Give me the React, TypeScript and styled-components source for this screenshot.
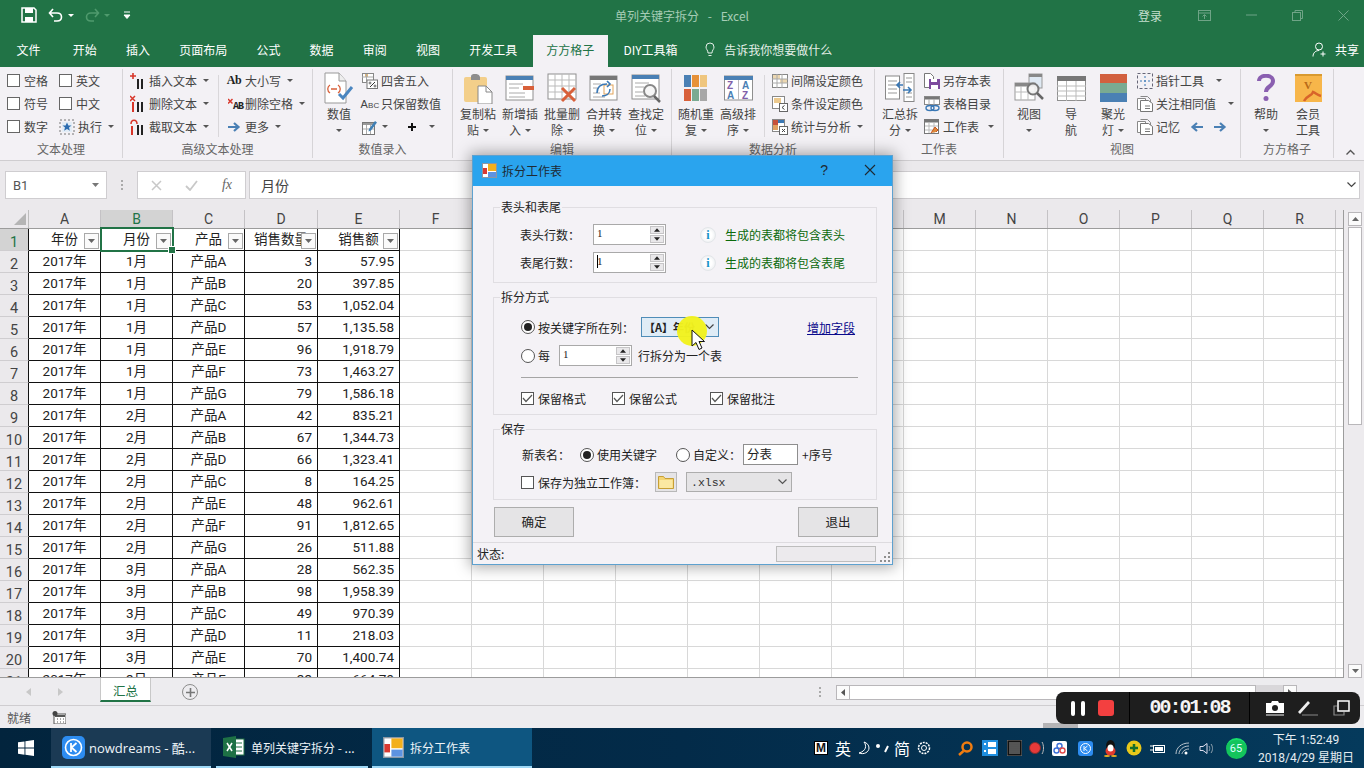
import React from 'react';
import styled, { createGlobalStyle } from 'styled-components';

const Global = createGlobalStyle`
  html, body { margin: 0; padding: 0; width: 1364px; height: 768px; overflow: hidden; background: #edebee; }
  * { box-sizing: border-box; }
  body { font-family: "Noto Sans CJK SC", Roboto, sans-serif; font-size: 12px; color: #444; }
`;

const Screen = styled.div`position: relative; width: 1364px; height: 768px; display: flex; flex-direction: column; overflow: hidden;`;

/* ---------- title ---------- */
const TitleBar = styled.div`height: 34px; padding-bottom: 4px; background: #217346; display: flex; align-items: center; color: #a6cdb6; flex: none;`;
const Qat = styled.div`width: 140px; display: flex; align-items: center; padding-left: 21px; flex: none;`;
const DocTitle = styled.div`width: 1084px; text-align: center; white-space: pre; font-size: 12px; word-spacing: 1.700px;`;
const Login = styled.div`margin-left: -86px; width: 40px; color: #c4dfce;`;
const WinBtns = styled.div`display: flex; margin-left: 20px; gap: 35px; align-items: center;`;

const TabsRow = styled.div`height: 33px; background: #217346; display: flex; align-items: flex-end; padding-left: 2px; color: #fff; flex: none; position: relative;`;
const Tab = styled.div<{ $active?: boolean; $mr?: number }>`
  height: 32px; line-height: 29px; padding: 0 ${p => (p.$active ? 13.5 : 14.6)}px; margin-right: ${p => p.$mr ?? 0}px;
  ${p => p.$active && 'background:#f3f1f5;color:#217346;margin-left:1px;margin-right:1px;'}
`;
const Tell = styled.div`display: flex; align-items: center; gap: 9px; height: 32px; padding-bottom: 3px; margin-left: 13px; color: #e4efe8;`;
const Share = styled.div`margin-left: auto; margin-right: 5px; display: flex; align-items: center; gap: 7px; height: 32px; padding-bottom: 3px;`;

/* ---------- ribbon ---------- */
const Ribbon = styled.div`height: 94px; background: #f3f1f5; display: flex; border-bottom: 1px solid #cfcdd0; padding-top: 2px; flex: none; position: relative;`;
const Group = styled.div<{ $w: number }>`width: ${p => p.$w}px; flex: none; display: flex; flex-direction: column; border-right: 1px solid #d6d4d7; height: 89px;`;
const GroupBody = styled.div<{ $pl: number }>`height: 70px; display: flex; padding-left: ${p => p.$pl}px;`;
const GroupLabel = styled.div`height: 19px; line-height: 20px; text-align: center; color: #666; font-size: 12px;`;
const SmallCol = styled.div<{ $w?: number; $ml?: number }>`display: flex; flex-direction: column; ${p => p.$w && `width:${p.$w}px;`} ${p => p.$ml && `margin-left:${p.$ml}px;`}`;
const Small = styled.div`height: 23px; display: flex; align-items: center; gap: 3px; white-space: nowrap; color: #444;`;
const IconSlot = styled.span`width: 16px; height: 18px; display: flex; align-items: center; justify-content: center; flex: none;`;
const Caret = styled.i<{ $ml?: number }>`display: inline-block; width: 0; height: 0; border-left: 3px solid transparent; border-right: 3px solid transparent; border-top: 3px solid #555; margin-left: ${p => p.$ml ?? 3}px; flex: none;`;
const Check = styled.span`width: 13px; height: 13px; background: #fff; border: 1px solid #666; flex: none; margin-right: 1px;`;
const VSep = styled.div<{ $mr: number; $ml?: number }>`width: 1px; height: 62px; margin: 6px ${p => p.$mr}px 0 ${p => p.$ml ?? 0}px; background: #d9d7da; flex: none;`;
const Large = styled.div`width: 42px; flex: none; display: flex; flex-direction: column; align-items: center; color: #444;`;
const LargeIcon = styled.div`height: 37px; display: flex; align-items: center; justify-content: center;`;
const LargeLine = styled.div`height: 16px; line-height: 16px; display: flex; align-items: center; justify-content: center; white-space: nowrap;`;
const BoldTag = styled.span<{ $size?: number }>`font-family: "Liberation Serif", serif; font-weight: 700; color: #222; font-size: ${p => p.$size ?? 12}px; letter-spacing: -.3px;`;
const AbTag = styled(BoldTag)`margin: 5px -3px 0 0; font-family: "Liberation Mono", monospace; letter-spacing: -1px;`;
const SansTag = styled.span`font-family: "Liberation Sans", sans-serif; color: #444; font-size: 11px; font-variant: small-caps; letter-spacing: .2px;`;
const Collapse = styled.div`position: absolute; right: 9px; bottom: 5px; line-height: 0;`;

/* ---------- formula ---------- */
const FormulaRow = styled.div`height: 49px; background: #ebe9ec; display: flex; align-items: center; padding: 0 4px 1px 5px; flex: none;`;
const NameBox = styled.div`width: 102px; height: 28px; background: #fff; border: 1px solid #cfcdd0; display: flex; align-items: center; justify-content: space-between; padding: 0 7px; color: #555; font-family: Roboto, sans-serif; font-size: 13px;`;
const Grip = styled.div`width: 30px; display: flex; flex-direction: column; align-items: center; gap: 2px;
  i { width: 2px; height: 2px; background: #aaa; }`;
const FxBox = styled.div`width: 109px; height: 28px; background: #fff; border: 1px solid #cfcdd0; display: flex; align-items: center; justify-content: space-between; padding: 0 13px 0 13px; color: #777;`;
const FxLabel = styled.span`font-family: "Liberation Serif", serif; font-style: italic; font-size: 14px; color: #666;`;
const FormulaInput = styled.div`flex: 1; margin-left: 3px; height: 28px; background: #fff; border: 1px solid #cfcdd0; display: flex; align-items: center; justify-content: space-between; padding: 0 3px 0 11px; font-size: 14px; color: #444;`;

/* ---------- sheet ---------- */
const SheetArea = styled.div`height: 468px; display: flex; flex: none;`;
const SheetGrid = styled.div`width: 1344px; height: 468px; overflow: hidden; background: #fff; border-right: 1px solid #9c9c9c; display: flex; flex-direction: column; flex: none; border-bottom: 1px solid #9c9c9c;`;
const HeadRow = styled.div`display: flex; height: 18px; background: #ebe9ec; border-bottom: 1px solid #9c9c9c; flex: none; box-sizing: content-box;`;
const Corner = styled.div`width: 29px; height: 18px; flex: none; padding: 3px 0 0 14px; border-right: 1px solid #bdbdbd; line-height: 0;`;
const ColHead = styled.div<{ $w: number; $on?: boolean }>`
  width: ${p => p.$w}px; flex: none; height: 18px; line-height: 19px; text-align: center; font-family: Roboto, sans-serif; font-size: 14px;
  border-right: 1px solid #c4c2c5; color: ${p => (p.$on ? '#217346' : '#444')}; background: ${p => (p.$on ? '#d3d3d3' : 'transparent')};
`;
const Row = styled.div`display: flex; height: 22px; flex: none;`;
const RowHead = styled.div<{ $on?: boolean }>`
  width: 29px; flex: none; height: 22px; background: ${p => (p.$on ? '#d3d3d3' : '#ebe9ec')}; text-align: center; padding-top: 4px; line-height: 20px;
  border-right: 1px solid #111; border-bottom: 1px solid #cfcdd0; font-family: Roboto, sans-serif; font-size: 14.5px; color: ${p => (p.$on ? '#217346' : '#444')};
`;
const Cell = styled.div<{ $w: number; $align?: string }>`
  position: relative; width: ${p => p.$w}px; flex: none; height: 22px; line-height: 21px; white-space: nowrap; overflow: hidden;
  border-right: 1px solid #111; border-bottom: 1px solid #111; color: #222;
  font-family: Roboto, "Noto Sans CJK SC", sans-serif; font-size: 13.5px;
  text-align: ${p => p.$align ?? 'center'}; padding-right: ${p => (p.$align === 'right' ? 5 : 0)}px;
`;
const BlankCell = styled.div<{ $w: number }>`width: ${p => p.$w}px; flex: none; height: 22px; border-right: 1px solid #d8d8d8; border-bottom: 1px solid #d8d8d8;`;
const FilterBtn = styled.span`position: absolute; right: 1px; top: 4px; width: 15px; height: 16px; background: #fafafa; border: 1px solid #a9a9a9; display: flex; align-items: center; justify-content: center;`;
const Selected = styled.div`position: absolute; left: 100px; top: 17px; width: 74px; height: 25px; border: 2px solid #217346; pointer-events: none;
  &::after { content: ''; position: absolute; right: -4px; bottom: -4px; width: 6px; height: 6px; background: #217346; border: 1px solid #fff; }`;
const GridWrap = styled.div`position: relative; flex: none; width: 1344px;`;
const VScroll = styled.div`width: 20px; flex: none; padding: 2px 2px 0 4px; display: flex; flex-direction: column; gap: 1px;`;
const ScrollBtn = styled.div`width: 14px; height: 14px; background: #fbfbfb; border: 1px solid #b9b7ba; display: flex; align-items: center; justify-content: center; flex: none;`;
const Thumb = styled.div`width: 14px; height: 198px; background: #fff; border: 1px solid #b9b7ba; flex: none;`;
const TrackGap = styled.div`flex: 1;`;

/* ---------- bottom bars ---------- */
const SheetBar = styled.div`height: 28px; background: #edecef; display: flex; align-items: flex-start; flex: none; border-bottom: 1px solid #cfcdd0;`;
const SheetArrows = styled.div`width: 100px; height: 28px; display: flex; align-items: center; padding-left: 26px; gap: 25px;`;
const SheetTab = styled.div`width: 51px; height: 24px; background: #fff; color: #217346; text-align: center; line-height: 25px; font-size: 12.5px; border-bottom: 2px solid #217346; border-left: 1px solid #c8c8c8; border-right: 1px solid #c8c8c8;`;
const AddSheet = styled.div`margin: 6px 0 0 31px; width: 16px; height: 16px; border: 1.5px solid #8c8c8c; border-radius: 50%; color: #777; display: flex; align-items: center; justify-content: center;`;
const Dots = styled.div`margin: 9px 0 0 621px; display: flex; flex-direction: column; gap: 2px; i { width: 2px; height: 2px; background: #aaa; }`;
const HScroll = styled.div`margin: 7px 0 0 15px; display: flex; height: 15px;`;
const HArrow = styled.div`width: 14px; height: 15px; background: #fbfbfb; border: 1px solid #b9b7ba; display: flex; align-items: center; justify-content: center;`;
const HThumb = styled.div`width: 406px; height: 15px; background: #fff; border: 1px solid #b9b7ba; border-left: 0;`;
const HGrey = styled.div`width: 27px; height: 15px; background: #d9d7da;`;

const StatusBar = styled.div`height: 22px; background: #edecef; display: flex; align-items: center; padding-left: 7px; gap: 21px; color: #555; flex: none; position: relative;`;
const ZoomStub = styled.div`position: absolute; left: 1043px; bottom: 0; width: 35px; height: 5px; background: #b5b4b6;`;

/* ---------- taskbar ---------- */
const Taskbar = styled.div`height: 40px; background: linear-gradient(90deg, #02243d 0%, #032b49 50%, #053a5c 100%); display: flex; align-items: stretch; color: #fff; flex: none;`;
const Start = styled.div`width: 51px; display: flex; align-items: center; justify-content: center;`;
const TaskItem = styled.div<{ $w: number; $bg?: string; $ml?: number; $pl?: number }>`
  width: ${p => p.$w}px; margin-left: ${p => p.$ml ?? 0}px; background: ${p => p.$bg ?? 'transparent'}; display: flex; align-items: center; gap: 4px; padding: 0 4px 0 ${p => p.$pl ?? 11}px; font-size: 12px;
  border-bottom: 2px solid #9ed8f6; white-space: nowrap; color: #eef4f8; overflow: hidden;
`;
const TaskLatin = styled.span`font-family: "Open Sans", "Noto Sans CJK SC", sans-serif; font-size: 13px;`;
const Tray = styled.div`margin-left: auto; display: flex; align-items: center; height: 40px;`;
const TraySlot = styled.span<{ $w: number; $ml?: number }>`width: ${p => p.$w}px; margin-left: ${p => p.$ml ?? 0}px; flex: none; display: flex; align-items: center; justify-content: center; color: #fff;`;
const MBox = styled.span`width: 14px; height: 14px; background: #fff; color: #111; border: 1px solid #000; font: 700 12px/12px "Liberation Sans", sans-serif; text-align: center;`;
const ImeText = styled.span`font-size: 16px; color: #fff;`;
const BatteryBadge = styled.span`width: 21px; height: 21px; border-radius: 50%; background: #13c45c; color: #dff; border-top: 2px solid #18e06c; font: 400 11px/18px Roboto, sans-serif; text-align: center;`;
const Clock = styled.div`width: 108px; margin-left: 6px; padding: 1px 8px 0 0; font-size: 12px; line-height: 18px; color: #e6edf2; display: flex; flex-direction: column; align-items: center; white-space: nowrap; font-family: Roboto, "Noto Sans CJK SC", sans-serif;`;

/* ---------- dialog ---------- */
const Dialog = styled.div`position: absolute; left: 472px; top: 155px; width: 421px; height: 410px; background: #f4f2f6; border: 1px solid #5ea1cf; box-shadow: 0 0 14px 2px rgba(0, 0, 0, .35); color: #222; display: flex; flex-direction: column; font-size: 12px;`;
const DlgTitle = styled.div`height: 30px; background: #2aa4ee; display: flex; align-items: center; padding: 0 16px 2px 9px; gap: 5px; color: #1e2a33; flex: none;`;
const DlgTitleRight = styled.div`margin-left: auto; display: flex; align-items: center; gap: 36px; font-size: 14px; font-family: "Liberation Sans", sans-serif;`;
const GroupBox = styled.div<{ $h: number; $mt: number; $pt: number; $pl: number }>`
  position: relative; width: 384px; height: ${p => p.$h}px; margin: ${p => p.$mt}px 0 0 20px; padding: ${p => p.$pt}px 0 0 ${p => p.$pl}px; border: 1px solid #e0dee2; display: flex; flex-direction: column; flex: none;
`;
const Legend = styled.span`position: absolute; left: 6px; top: -10px; padding: 0 1px; background: #f4f2f6; line-height: 18px;`;
const FormRow = styled.div<{ $h?: number; $mt?: number }>`display: flex; align-items: center; height: ${p => p.$h ?? 21}px; margin-top: ${p => p.$mt ?? 0}px; white-space: nowrap;`;
const FieldLabel = styled.span<{ $w?: number; $ml?: number }>`${p => p.$w && `width:${p.$w}px;`} margin-left: ${p => p.$ml ?? 0}px; flex: none;`;
const Spin = styled.div<{ $ml?: number }>`width: 73px; height: 21px; background: #fff; border: 1px solid #a9a9a9; margin-left: ${p => p.$ml ?? 0}px; display: flex; justify-content: space-between; flex: none; font: 11px/14px "Liberation Serif", serif; padding: 1px 1px 1px 3px;`;
const SpinValue = styled.span<{ $focus?: boolean }>`position: relative;
  ${p => p.$focus && `&::before { content: ''; position: absolute; left: 0; top: 1px; width: 1px; height: 13px; background: #000; }`}`;
const SpinBtns = styled.div`width: 14px; display: flex; flex-direction: column; gap: 1px;`;
const SpinBtn = styled.div`flex: 1; background: #e9e8ea; border: 1px solid #c6c5c7; display: flex; align-items: center; justify-content: center;`;
const InfoDot = styled.span`width: 16px; height: 16px; border-radius: 50%; background: radial-gradient(circle, #fff 40%, #e2e6ea 100%); border: 1px solid #e3e6e9; color: #1993c8; margin: 0 9px 0 34px; font: 700 12px/14px "Liberation Serif", serif; text-align: center; flex: none;`;
const Hint = styled.span`color: #0b6a0b;`;
const Radio = styled.span<{ $on?: boolean; $ml?: number }>`
  width: 14px; height: 14px; border: 1px solid #555; border-radius: 50%; background: #fff; margin-left: ${p => p.$ml ?? 0}px; margin-right: 3px; flex: none; display: flex; align-items: center; justify-content: center;
  &::after { content: ''; width: 8px; height: 8px; border-radius: 50%; background: ${p => (p.$on ? '#222' : 'transparent')}; }
`;
const Tick = styled.span<{ $ml?: number }>`width: 13px; height: 13px; border: 1px solid #555; background: #fff; margin-left: ${p => p.$ml ?? 0}px; margin-right: 4px; flex: none; display: flex; align-items: center; justify-content: center;`;
const Combo = styled.div`width: 78px; height: 20px; margin-left: 7px; background: #dfecf6; border: 1px solid #4f8db8; display: flex; align-items: center; justify-content: space-between; padding: 0 4px 0 2px; font-weight: 700; font-size: 11px; color: #222; overflow: hidden;`;
const LinkText = styled.span`margin-left: 88px; color: #0a0a8c; text-decoration: underline;`;
const Rule = styled.div`width: 337px; height: 1px; background: #a5a5a5; margin-top: 11px; flex: none;`;
const TextInput = styled.div`width: 55px; height: 21px; margin-left: 2px; margin-right: 4px; background: #fff; border: 1px solid #8e8e8e; line-height: 18px; padding-left: 3px; font-size: 12.5px;`;
const FolderBtn = styled.div`width: 22px; height: 20px; margin-left: 9px; background: #e5e4e6; border: 1px solid #b8b8b8; display: flex; align-items: center; justify-content: center;`;
const SelectBox = styled.div`width: 106px; height: 20px; margin-left: 9px; background: #e5e4e6; border: 1px solid #adadad; display: flex; align-items: center; justify-content: space-between; padding: 0 4px; font: 11.5px "Liberation Mono", monospace; color: #333;`;
const BtnRow = styled.div`display: flex; justify-content: space-between; width: 384px; margin: 7px 0 0 21px; flex: none;`;
const DlgBtn = styled.div`width: 80px; height: 30px; background: #e5e4e6; border: 1px solid #adadad; text-align: center; line-height: 28px; font-size: 12.5px;`;
const DlgStatus = styled.div`margin-top: 5px; flex: 1; border-top: 1px solid #dddbdf; display: flex; align-items: center; padding: 0 2px 0 4px; position: relative;`;
const Progress = styled.div`width: 100px; height: 16px; margin-left: auto; margin-right: 4px; background: #eceaed; border: 1px solid #bdbdbd;`;
const ResizeGrip = styled.span`align-self: flex-end; margin-bottom: 2px; line-height: 0;`;

const Spot = styled.div`position: absolute; left: 677px; top: 316px; width: 30px; height: 30px; border-radius: 50%; background: #f2f21e; opacity: .97;`;
const Pointer = styled.div`position: absolute; left: 691px; top: 329px; line-height: 0;`;

/* ---------- recorder ---------- */
const Recorder = styled.div`position: absolute; left: 1056px; top: 692px; width: 304px; height: 32px; border-radius: 8px; background: #1e1e1e; display: flex; align-items: center; color: #fff;`;
const RecSection = styled.div<{ $w: number; $border?: boolean; $pl?: number }>`width: ${p => p.$w}px; height: 32px; padding-left: ${p => p.$pl ?? 0}px; display: flex; align-items: center; justify-content: center; flex: none; ${p => p.$border && 'border-right:1px solid #000;'}`;
const PauseBar = styled.i`width: 4px; height: 15px; background: #fff; border-radius: 2px; margin-right: 6px;`;
const StopBtn = styled.i`width: 16px; height: 16px; background: #f34040; border-radius: 3px; margin-left: 13px;`;
const Timer = styled.span`font: 700 20px/1 "Liberation Mono", monospace; letter-spacing: -2px; color: #f4f4f4;`;

/* ---------- drawings ---------- */
const S = ({ w, h, children }: { w: number; h: number; children: React.ReactNode }) => (
  <svg width={w} height={h} viewBox={`0 0 ${w} ${h}`} fill="none">{children}</svg>
);
const Bars = ({ x = 6 }: { x?: number }) => (<><rect x={x} y="7" width="2" height="10" fill="#222" /><rect x={x + 4} y="7" width="2" height="10" fill="#222" /></>);
const IcoInsert = () => <S w={16} h={18}><path d="M3 1v6M0 4h6" stroke="#d8362a" strokeWidth="1.6" /><Bars x={7} /></S>;
const IcoDelete = () => <S w={16} h={18}><path d="M0 1l5 5M5 1L0 6" stroke="#d8362a" strokeWidth="1.5" /><rect x="2" y="7" width="2" height="10" fill="#d8362a" /><Bars x={7} /></S>;
const IcoCut = () => <S w={16} h={18}><path d="M1 6c0-5 6-5 6 0" stroke="#d8362a" strokeWidth="1.5" /><rect x="1" y="8" width="2" height="9" fill="#d8362a" /><Bars x={7} /></S>;
const IcoArrowR = ({ c = '#4a80b4' }: { c?: string }) => <S w={14} h={12}><path d="M1 6h10M7 2l4.5 4L7 10" stroke={c} strokeWidth="2.2" /></S>;
const IcoArrowL = () => <S w={14} h={12}><path d="M13 6H3M7 2L2.5 6 7 10" stroke="#4a80b4" strokeWidth="2.2" /></S>;
const IcoStar = () => <S w={16} h={16}><rect x="1" y="1" width="14" height="14" stroke="#777" strokeDasharray="2 2" /><rect x="3" y="3" width="10" height="10" fill="#e3edf6" /><path d="M8 3.5l1.4 3h3.1l-2.5 2 .9 3.2L8 9.9l-2.9 1.8.9-3.2-2.5-2h3.1z" fill="#2c6cb0" /></S>;
const IcoPercent = () => <S w={16} h={16}><rect x="0.5" y="0.5" width="11" height="9" stroke="#888" fill="#fff" /><rect x="3" y="1" width="3" height="3" fill="#e4b97a" /><path d="M4.5 1v9M0 4h11" stroke="#aaa" /><rect x="5" y="7" width="10.5" height="8.5" fill="#fff" stroke="#777" /><path d="M8 14l5-5" stroke="#333" /><circle cx="8" cy="10" r="1" stroke="#333" strokeWidth=".7" /><circle cx="13" cy="13" r="1" stroke="#333" strokeWidth=".7" /></S>;
const IcoEdit = () => <S w={16} h={16}><rect x="0.5" y="3.5" width="12" height="12" fill="#fff" stroke="#777" /><rect x="1" y="4" width="11" height="2" fill="#999" /><path d="M4.5 6v9M8.5 6v9M1 10h11" stroke="#aaa" /><path d="M7 10l6-8 2 1.5-6 8-2.500 1z" fill="#3f7fb5" /></S>;
const IcoNumber = () => (
  <S w={30} h={32}>
    <path d="M1 1h14l7 8v22H1z" fill="#fff" stroke="#999" /><path d="M15 1v8h7" stroke="#999" fill="#eee" />
    <path d="M6 13c-3 2-3 6 0 8M14 13c3 2 3 6 0 8M7 17h6" stroke="#d8603a" strokeWidth="1.3" />
    <path d="M15 22l4 4 9-11" stroke="#4a86c0" strokeWidth="3" />
  </S>
);
const IcoPaste = () => (
  <S w={30} h={32}>
    <rect x="1" y="5" width="23" height="25" rx="2" fill="#f3cf8a" /><path d="M8 5c0-3 2-3 4-3s4 0 5 3v3H8z" fill="#8d8d8d" />
    <path d="M15 14h8l6 6v12H15z" fill="#fff" stroke="#888" /><path d="M23 14v6h6" stroke="#888" />
  </S>
);
const Sheet = ({ header = '#4a80b4' }: { header?: string }) => (<><rect x="1" y="2" width="27" height="24" fill="#fff" stroke="#8f8f8f" /><rect x="1" y="2" width="27" height="4" fill={header} /></>);
const IcoNew = () => <S w={30} h={28}><Sheet /><path d="M4 10h14M4 14h10M4 19h16M4 23h16" stroke="#aaa" /><rect x="18" y="12" width="11" height="4" fill="#d8603a" /></S>;
const IcoBatch = () => <S w={31} h={30}><rect x="1" y="1" width="28" height="25" fill="#fff" stroke="#8f8f8f" /><path d="M1 7h28M1 13h28M1 19h28M8 1v25M15 1v25M22 1v25" stroke="#bbb" /><path d="M15 15l13 13M28 15L15 28" stroke="#d8603a" strokeWidth="3" /></S>;
const IcoMerge = () => <S w={30} h={28}><Sheet header="#777" /><path d="M4 10h8M4 14h6M4 19h7M4 23h12" stroke="#aaa" /><rect x="15" y="11" width="9" height="9" stroke="#e1a35a" fill="#fff" /><path d="M8 19c0-7 5-9 10-9M18 7l3 3-3 3" stroke="#3a78b5" strokeWidth="1.6" /><path d="M21 15c0 5-4 7-8 7" stroke="#3a78b5" strokeWidth="1.6" /></S>;
const IcoFind = () => <S w={31} h={30}><Sheet /><path d="M4 10h14M4 14h9M4 19h8M4 23h10" stroke="#aaa" /><circle cx="19" cy="18" r="6" fill="#f6f6f6" stroke="#888" strokeWidth="2" /><path d="M23 23l6 6" stroke="#666" strokeWidth="2.5" /></S>;
const IcoRandom = () => (
  <S w={24} h={28}>
    <rect x="0" y="1" width="7" height="12" fill="#4a80b4" /><rect x="8" y="1" width="7" height="12" fill="#e69138" /><rect x="16" y="1" width="7" height="12" fill="#efc67e" />
    <rect x="0" y="15" width="7" height="12" fill="#d8603a" /><rect x="8" y="15" width="7" height="12" fill="#7aaa92" /><rect x="16" y="15" width="7" height="12" fill="#a7a7a7" />
  </S>
);
const SortText = styled.text`font: 700 10px "Liberation Sans", sans-serif;`;
const IcoSort = () => (
  <S w={29} h={26}>
    <rect x="0.500" y="1" width="28" height="24" fill="#fff" stroke="#8f8f8f" /><rect x="0" y="1" width="29" height="4" fill="#4a80b4" /><path d="M14.500 5v20" stroke="#bbb" />
    <SortText x="3" y="14" fill="#8060a8">Z</SortText><SortText x="3" y="24" fill="#4a80b4">A</SortText><SortText x="18" y="14" fill="#4a80b4">A</SortText><SortText x="18" y="24" fill="#8060a8">Z</SortText>
  </S>
);
const IcoSplit = () => <S w={30} h={30}><rect x="0.5" y="3" width="14" height="23" fill="#fff" stroke="#888" /><path d="M3 8h9M3 12h9M3 16h9M3 20h9" stroke="#999" /><rect x="19" y="0.5" width="10" height="28" fill="#fff" stroke="#888" /><path d="M21 5h6M21 9h6M21 20h6M21 24h6" stroke="#999" /><path d="M18 12h-6M15 9l-3 3 3 3M18 17h8M23 14l3 3-3 3" stroke="#3a78b5" strokeWidth="1.6" /></S>;
const IcoInterval = () => <S w={16} h={14}><rect x="0.5" y="0.5" width="15" height="13" fill="#fff" stroke="#888" /><rect x="1" y="1" width="7" height="4" fill="#ecd7b1" /><rect x="8" y="5" width="7" height="4" fill="#ecd7b1" /><path d="M5 0v14M10 0v14M0 5h16M0 9h16" stroke="#aaa" /></S>;
const IcoCond = () => <S w={16} h={16}><rect x="0.5" y="0.5" width="12" height="12" fill="#fff" stroke="#888" /><rect x="2" y="2" width="7" height="5" fill="#ecc98d" /><rect x="7.500" y="7.500" width="8" height="8" fill="#fff" stroke="#666" /><path d="M12.500 9.500l-2.500 2 2.500 2" stroke="#444" /></S>;
const IcoStat = () => <S w={16} h={16}><rect x="0.5" y="0.5" width="12" height="12" fill="#fff" stroke="#888" /><rect x="1" y="1" width="5" height="5" fill="#c6503a" /><rect x="6" y="1" width="6" height="3" fill="#3a78b5" /><rect x="1" y="6" width="5" height="5" fill="#e0a060" /><rect x="7.500" y="7.500" width="8" height="8" fill="#fff" stroke="#666" /><path d="M10 13l3-3M10 10l3 3" stroke="#444" /></S>;
const IcoSaveAs = () => <S w={16} h={16}><path d="M.5.5h6l3 3v11H.5z" fill="#fff" stroke="#777" /><rect x="5" y="6" width="11" height="10" fill="#7d4a9e" /><rect x="7" y="6" width="6" height="3" fill="#fff" /><rect x="7" y="12" width="7" height="4" fill="#fff" /></S>;
const IcoList = () => <S w={16} h={16}><rect x="0.500" y="0.500" width="15" height="8" fill="#fff" stroke="#888" /><rect x="1" y="1" width="14" height="2.500" fill="#777" /><path d="M5 3v6M10 3v6" stroke="#aaa" /><ellipse cx="6" cy="12" rx="4" ry="2.500" stroke="#3a78b5" strokeWidth="1.400" /><ellipse cx="11" cy="12" rx="4" ry="2.500" stroke="#3a78b5" strokeWidth="1.400" /></S>;
const IcoWs = () => <S w={16} h={16}><rect x="0.500" y="0.500" width="14" height="14" fill="#fff" stroke="#777" /><rect x="1" y="1" width="13" height="2.500" fill="#777" /><path d="M5 3v11M10 3v11M1 7h13M1 11h13" stroke="#bbb" /><path d="M7 14l4-6 3 3-2 2" fill="#dd8a3a" stroke="#c8541f" /></S>;
const IcoView = () => <S w={30} h={30}><rect x="15" y="1" width="13" height="14" fill="#dfe9f3" stroke="#999" /><rect x="15" y="1" width="13" height="3" fill="#888" /><rect x="1" y="10" width="20" height="17" fill="#fff" stroke="#999" /><rect x="1" y="10" width="20" height="3.500" fill="#888" /><path d="M7 13v14M14 13v14M1 19h20" stroke="#bbb" /><circle cx="19" cy="16" r="5.500" fill="#f4f4f4" fillOpacity=".9" stroke="#777" strokeWidth="2" /><path d="M23 20l6 6" stroke="#666" strokeWidth="2.500" /></S>;
const IcoNav = () => <S w={29} h={26}><rect x="0.500" y="1.500" width="28" height="24" fill="#fff" stroke="#8f8f8f" /><rect x="0" y="1" width="29" height="5" fill="#777" /><path d="M0 11h29M0 16h29M0 21h29M9.500 6v20M19 6v20" stroke="#bbb" /></S>;
const IcoSpot = () => <S w={27} h={28}><rect width="27" height="9" fill="#d2603f" /><rect y="9" width="27" height="10" fill="#7aaa92" /><rect y="19" width="27" height="9" fill="#4a80b4" /></S>;
const IcoPointer = () => <S w={16} h={16}><rect x="0.500" y="0.500" width="15" height="15" stroke="#667" strokeDasharray="3 2" /><path d="M8 3v10M3 8h10" stroke="#3a78b5" strokeDasharray="2 2" /></S>;
const IcoDocs = () => <S w={16} h={16}><path d="M.5 2.500h8v11h-8z" fill="#fff" stroke="#888" /><path d="M3.500.5h7l3 3v4" stroke="#888" /><path d="M3.500 4.500h8l4 3v8h-12z" fill="#fff" stroke="#777" /><path d="M8 10h5M8 12.500h5" stroke="#777" /></S>;
const IcoHelp = () => <S w={20} h={28}><path d="M3 7c0-7 14-7 14 0 0 6-7 5-7 11" stroke="#8a5fb0" strokeWidth="4" /><circle cx="10" cy="24.500" r="2.500" fill="#8a5fb0" /></S>;
const VipV = styled.text`font: 700 11px "Liberation Serif", serif;`;
const IcoVip = () => <S w={27} h={28}><rect width="27" height="28" fill="#f7b64a" /><rect width="27" height="2" fill="#d99a30" /><VipV x="9" y="15" fill="#b96a18">V</VipV><path d="M9 27c3-6 8-5 9-9 3 1 4 3 8 4" stroke="#d8642a" strokeWidth="2.500" /></S>;
const CheckMark = () => <S w={11} h={9}><path d="M1 4l3 3.500L10 1" stroke="#555" strokeWidth="1.200" /></S>;
const Tri = ({ dir = 'up', c = '#444', s = 7 }: { dir?: 'up' | 'down'; c?: string; s?: number }) => (
  <svg width={s} height={4} viewBox="0 0 7 4"><path d={dir === 'up' ? 'M3.500 0L7 4H0z' : 'M0 0h7L3.500 4z'} fill={c} /></svg>
);
const Chev = ({ c = '#555', w = 9 }: { c?: string; w?: number }) => <svg width={w} height={6} viewBox="0 0 9 6" fill="none"><path d="M.5.500l4 4 4-4" stroke={c} strokeWidth="1.200" /></svg>;
const WinIcon = () => <svg width={16} height={16} viewBox="0 0 16 16"><path d="M0 2.300l6.500-.9v6.200H0zM7.400 1.300L16 0v7.600H7.400zM0 8.500h6.500v6.200L0 13.800zM7.400 8.500H16V16l-8.600-1.200z" fill="#fff" /></svg>;
const DlgIcon = ({ s = 15 }: { s?: number }) => (
  <svg width={s} height={s} viewBox="0 0 15 15"><rect x=".5" y=".5" width="14" height="14" fill="#fff" stroke="#8a97a3" /><rect x="6" y="1" width="8" height="7" fill="#f3b01c" /><rect x="1" y="5" width="4" height="6" fill="#d83a32" /><rect x="6" y="9" width="8" height="5" fill="#5d93e0" /></svg>
);
const Folder = () => <svg width={16} height={14} viewBox="0 0 16 14"><path d="M.5 1.500h5l1.500 2h8.500v10H.5z" fill="#f4d572" stroke="#c79f35" /><rect x="1.500" y="5" width="13" height="8" fill="#fbe8a2" /></svg>;

const cols = [72, 72, 72, 73, 82];
const blanks = Array.from({ length: 13 }, () => 72).concat(8);
const colNames = ['A', 'B', 'C', 'D', 'E', 'F', 'G', 'H', 'I', 'J', 'K', 'L', 'M', 'N', 'O', 'P', 'Q', 'R', ''];
const colWidths = [...cols, ...blanks];
const header = ['年份', '月份', '产品', '销售数量', '销售额'];
const data: [string, string, string, string][] = [
  ['1月', '产品A', '3', '57.95'], ['1月', '产品B', '20', '397.85'], ['1月', '产品C', '53', '1,052.04'], ['1月', '产品D', '57', '1,135.58'],
  ['1月', '产品E', '96', '1,918.79'], ['1月', '产品F', '73', '1,463.27'], ['1月', '产品G', '79', '1,586.18'], ['2月', '产品A', '42', '835.21'],
  ['2月', '产品B', '67', '1,344.73'], ['2月', '产品D', '66', '1,323.41'], ['2月', '产品C', '8', '164.25'], ['2月', '产品E', '48', '962.61'],
  ['2月', '产品F', '91', '1,812.65'], ['2月', '产品G', '26', '511.88'], ['3月', '产品A', '28', '562.35'], ['3月', '产品B', '98', '1,958.39'],
  ['3月', '产品C', '49', '970.39'], ['3月', '产品D', '11', '218.03'], ['3月', '产品E', '70', '1,400.74'], ['3月', '产品F', '33', '664.79'],
];
const tabs = ['开始', '插入', '页面布局', '公式', '数据', '审阅', '视图', '开发工具'];
const Blanks = () => <>{blanks.map((w, i) => <BlankCell key={i} $w={w} />)}</>;

const LargeBtn = ({ icon, l1, l2, caret }: { icon: React.ReactNode; l1: string; l2?: string; caret?: boolean }) => (
  <Large>
    <LargeIcon>{icon}</LargeIcon>
    <LargeLine>{l1}</LargeLine>
    <LargeLine>{l2}{caret && <Caret $ml={l2 ? 4 : 0} />}</LargeLine>
  </Large>
);
const Sm = ({ icon, text, caret, ml }: { icon: React.ReactNode; text: string; caret?: boolean; ml?: number }) => (
  <Small><IconSlot>{icon}</IconSlot><span>{text}</span>{caret && <Caret $ml={ml} />}</Small>
);
const Opt = ({ text }: { text: string }) => <Small><Check />{text}</Small>;
const SpinBox = ({ ml, focus }: { ml?: number; focus?: boolean }) => (
  <Spin $ml={ml}><SpinValue $focus={focus}>1</SpinValue><SpinBtns><SpinBtn><Tri s={6} c="#222" /></SpinBtn><SpinBtn><Tri s={6} dir="down" c="#222" /></SpinBtn></SpinBtns></Spin>
);

export default function App() {
  return (
    <Screen>
      <Global />
      <TitleBar>
        <Qat>
          <S w={16} h={16}><path d="M1 1h12l2 2v12H1z" stroke="#fff" strokeWidth="1.500" /><rect x="4" y="1" width="8" height="5" fill="#fff" /><rect x="4" y="10" width="8" height="5" fill="#fff" /></S>
          <span style={{ width: 11 }} />
          <S w={16} h={14}><path d="M5 1L1.500 5 5 9M2 5h7c6 0 6 8 0 8H6" stroke="#fff" strokeWidth="1.600" /></S>
          <Caret $ml={4} style={{ borderTopColor: '#fff' }} />
          <span style={{ width: 10 }} />
          <S w={16} h={14}><path d="M11 1l3.500 4L11 9M14 5H7c-6 0-6 8 0 8h3" stroke="#4f9a6d" strokeWidth="1.600" /></S>
          <Caret $ml={4} style={{ borderTopColor: '#4f9a6d' }} />
          <span style={{ width: 13 }} />
          <S w={8} h={8}><path d="M1 1h6M1 4h6L4 7.500z" stroke="#fff" fill="#fff" strokeWidth="1" /></S>
        </Qat>
        <DocTitle>{'单列关键字拆分  -  Excel'}</DocTitle>
        <Login>登录</Login>
        <WinBtns>
          <S w={13} h={11}><rect x=".5" y=".5" width="12" height="10" stroke="#6fa487" /><path d="M.5 3h12M6.500 9V5M4.500 6.500l2-2 2 2" stroke="#6fa487" /></S>
          <S w={11} h={2}><path d="M0 1h11" stroke="#6fa487" /></S>
          <S w={11} h={11}><rect x=".5" y="2.500" width="8" height="8" stroke="#6fa487" /><path d="M3 2.500V.5h7.500v8H8.500" stroke="#6fa487" /></S>
          <S w={11} h={11}><path d="M.5.500l10 10M10.500.5l-10 10" stroke="#6fa487" /></S>
        </WinBtns>
      </TitleBar>

      <TabsRow>
        <Tab $mr={3}>文件</Tab>
        {tabs.map(t => <Tab key={t}>{t}</Tab>)}
        <Tab $active>方方格子</Tab>
        <Tab>DIY工具箱</Tab>
        <Tell>
          <S w={10} h={15}><path d="M3 11C3 8 1 7.500 1 5a4 4 0 018 0c0 2.500-2 3-2 6zM3.500 13.500h3" stroke="#e4efe8" /></S>
          告诉我你想要做什么
        </Tell>
        <Share>
          <S w={16} h={15}><circle cx="7" cy="4.500" r="3.500" stroke="#fff" /><path d="M1 14.500c0-4 3-6 6-6M11 9.500v5M8.500 12h5" stroke="#fff" /></S>
          共享
        </Share>
      </TabsRow>

      <Ribbon>
        <Group $w={123}>
          <GroupBody $pl={7}>
            <SmallCol $w={52}><Opt text="空格" /><Opt text="符号" /><Opt text="数字" /></SmallCol>
            <SmallCol>
              <Opt text="英文" /><Opt text="中文" />
              <Small><IconSlot><IcoStar /></IconSlot>执行<Caret /></Small>
            </SmallCol>
          </GroupBody>
          <GroupLabel>文本处理</GroupLabel>
        </Group>
        <Group $w={190}>
          <GroupBody $pl={7}>
            <SmallCol $w={88}>
              <Sm icon={<IcoInsert />} text="插入文本" caret />
              <Sm icon={<IcoDelete />} text="删除文本" caret />
              <Sm icon={<IcoCut />} text="截取文本" caret />
            </SmallCol>
            <VSep $mr={7} />
            <SmallCol>
              <Sm icon={<BoldTag>Ab</BoldTag>} text="大小写" caret />
              <Sm icon={<><S w={5} h={16}><path d="M0 3l4.500 4.500M4.500 3L0 7.500" stroke="#d8362a" strokeWidth="1.500" /></S><AbTag $size={10}>AB</AbTag></>} text="删除空格" caret />
              <Sm icon={<IcoArrowR />} text="更多" caret />
            </SmallCol>
          </GroupBody>
          <GroupLabel>高级文本处理</GroupLabel>
        </Group>
        <Group $w={140}>
          <GroupBody $pl={5}>
            <LargeBtn icon={<IcoNumber />} l1="数值" caret />
            <SmallCol $ml={2}>
              <Sm icon={<IcoPercent />} text="四舍五入" />
              <Sm icon={<SansTag>Abc</SansTag>} text="只保留数值" />
              <Small><IconSlot><IcoEdit /></IconSlot><Caret $ml={1} /><span style={{ width: 14 }} /><S w={8} h={8}><path d="M4 0v8M0 4h8" stroke="#111" strokeWidth="2" /></S><Caret $ml={10} /></Small>
            </SmallCol>
          </GroupBody>
          <GroupLabel>数值录入</GroupLabel>
        </Group>
        <Group $w={219}>
          <GroupBody $pl={4}>
            <LargeBtn icon={<IcoPaste />} l1="复制粘" l2="贴" caret />
            <LargeBtn icon={<IcoNew />} l1="新增插" l2="入" caret />
            <LargeBtn icon={<IcoBatch />} l1="批量删" l2="除" caret />
            <LargeBtn icon={<IcoMerge />} l1="合并转" l2="换" caret />
            <LargeBtn icon={<IcoFind />} l1="查找定" l2="位" caret />
          </GroupBody>
          <GroupLabel>编辑</GroupLabel>
        </Group>
        <Group $w={203}>
          <GroupBody $pl={3}>
            <LargeBtn icon={<IcoRandom />} l1="随机重" l2="复" caret />
            <LargeBtn icon={<IcoSort />} l1="高级排" l2="序" caret />
            <VSep $ml={5} $mr={7} />
            <SmallCol>
              <Sm icon={<IcoInterval />} text="间隔设定颜色" />
              <Sm icon={<IcoCond />} text="条件设定颜色" />
              <Sm icon={<IcoStat />} text="统计与分析" caret />
            </SmallCol>
          </GroupBody>
          <GroupLabel>数据分析</GroupLabel>
        </Group>
        <Group $w={129}>
          <GroupBody $pl={4}>
            <LargeBtn icon={<IcoSplit />} l1="汇总拆" l2="分" caret />
            <SmallCol $ml={3}>
              <Sm icon={<IcoSaveAs />} text="另存本表" />
              <Sm icon={<IcoList />} text="表格目录" />
              <Sm icon={<IcoWs />} text="工作表" caret ml={6} />
            </SmallCol>
          </GroupBody>
          <GroupLabel>工作表</GroupLabel>
        </Group>
        <Group $w={237}>
          <GroupBody $pl={4}>
            <LargeBtn icon={<IcoView />} l1="视图" caret />
            <LargeBtn icon={<IcoNav />} l1="导" l2="航" />
            <LargeBtn icon={<IcoSpot />} l1="聚光" l2="灯" caret />
            <SmallCol $ml={3}>
              <Sm icon={<IcoPointer />} text="指针工具" caret ml={9} />
              <Sm icon={<IcoDocs />} text="关注相同值" caret ml={9} />
              <Small><IconSlot><IcoDocs /></IconSlot>记忆<span style={{ width: 4 }} /><IcoArrowL /><span style={{ width: 3 }} /><IcoArrowR /></Small>
            </SmallCol>
          </GroupBody>
          <GroupLabel>视图</GroupLabel>
        </Group>
        <Group $w={93}>
          <GroupBody $pl={4}>
            <LargeBtn icon={<IcoHelp />} l1="帮助" caret />
            <LargeBtn icon={<IcoVip />} l1="会员" l2="工具" />
          </GroupBody>
          <GroupLabel>方方格子</GroupLabel>
        </Group>
        <Collapse><S w={9} h={6}><path d="M.5 5.500l4-4 4 4" stroke="#555" strokeWidth="1.400" /></S></Collapse>
      </Ribbon>

      <FormulaRow>
        <NameBox>B1<Tri dir="down" c="#777" /></NameBox>
        <Grip><i /><i /><i /></Grip>
        <FxBox>
          <S w={11} h={11}><path d="M1 1l9 9M10 1l-9 9" stroke="#c8c8c8" strokeWidth="1.500" /></S>
          <S w={13} h={11}><path d="M1 6l4 4 7-9" stroke="#c8c8c8" strokeWidth="1.800" /></S>
          <FxLabel>fx</FxLabel>
        </FxBox>
        <FormulaInput>月份<Chev c="#444" /></FormulaInput>
      </FormulaRow>

      <SheetArea>
        <GridWrap>
          <SheetGrid>
            <HeadRow>
              <Corner><svg width={12} height={12} viewBox="0 0 12 12"><path d="M12 0v12H0z" fill="#b5b5b5" /></svg></Corner>
              {colWidths.map((w, i) => <ColHead key={i} $w={w} $on={i === 1}>{colNames[i]}</ColHead>)}
            </HeadRow>
            <Row>
              <RowHead $on>1</RowHead>
              {header.map((h, i) => (
                <Cell key={h} $w={cols[i]}>{h}<FilterBtn><Tri dir="down" c="#666" /></FilterBtn></Cell>
              ))}
              <Blanks />
            </Row>
            {data.map((r, i) => (
              <Row key={i}>
                <RowHead>{i + 2}</RowHead>
                <Cell $w={cols[0]}>2017年</Cell>
                <Cell $w={cols[1]}>{r[0]}</Cell>
                <Cell $w={cols[2]}>{r[1]}</Cell>
                <Cell $w={cols[3]} $align="right">{r[2]}</Cell>
                <Cell $w={cols[4]} $align="right">{r[3]}</Cell>
                <Blanks />
              </Row>
            ))}
          </SheetGrid>
          <Selected />
        </GridWrap>
        <VScroll>
          <ScrollBtn><Tri c="#666" /></ScrollBtn>
          <Thumb />
          <TrackGap />
          <ScrollBtn><Tri dir="down" c="#666" /></ScrollBtn>
        </VScroll>
      </SheetArea>

      <SheetBar>
        <SheetArrows>
          <S w={6} h={8}><path d="M5 0v8L0 4z" fill="#c8c8c8" /></S>
          <S w={6} h={8}><path d="M1 0v8l5-4z" fill="#c8c8c8" /></S>
        </SheetArrows>
        <SheetTab>汇总</SheetTab>
        <AddSheet><S w={9} h={9}><path d="M4.500 0v9M0 4.500h9" stroke="#777" strokeWidth="1.600" /></S></AddSheet>
        <Dots><i /><i /><i /></Dots>
        <HScroll>
          <HArrow><S w={4} h={7}><path d="M4 0v7L0 3.500z" fill="#555" /></S></HArrow>
          <HThumb />
          <HGrey />
          <HArrow><S w={4} h={7}><path d="M0 0v7l4-3.500z" fill="#555" /></S></HArrow>
        </HScroll>
      </SheetBar>

      <StatusBar>
        就绪
        <S w={14} h={13}><rect x="2" y="3" width="12" height="10" fill="#fff" stroke="#555" /><rect x="3" y="4" width="10" height="2" fill="#555" /><path d="M5 8h1M8 8h1M11 8h1M5 11h1M8 11h1M11 11h1" stroke="#555" /><circle cx="3" cy="2.500" r="2.500" fill="#444" /></S>
        <ZoomStub />
      </StatusBar>

      <Taskbar>
        <Start><WinIcon /></Start>
        <TaskItem $w={160} $bg="#1b3a54">
          <svg width={23} height={23} viewBox="0 0 23 23" style={{ flex: 'none' }}><rect width="23" height="23" rx="5" fill="#2d8cf0" /><circle cx="11.500" cy="11.500" r="8" stroke="#fff" strokeWidth="1.600" fill="none" /><path d="M9 7v9M14.500 7L9.500 11.500l5 4.500" stroke="#fff" strokeWidth="1.800" fill="none" /></svg>
          <TaskLatin>nowdreams - 酷...</TaskLatin>
        </TaskItem>
        <TaskItem $w={152} $ml={5} $pl={7}>
          <svg width={22} height={22} viewBox="0 0 22 22" style={{ flex: 'none', marginRight: 2 }}><rect x="9" y="3" width="12" height="16" fill="#fff" stroke="#1e7145" /><path d="M12 7h7M12 11h7M12 15h7" stroke="#1e7145" /><path d="M0 2l13-2v22L0 20z" fill="#1e7145" /><path d="M4 7l5 8M9 7l-5 8" stroke="#fff" strokeWidth="1.500" /></svg>
          单列关键字拆分 - ...
        </TaskItem>
        <TaskItem $w={160} $ml={4} $bg="#0e5681">
          <DlgIcon s={21} />
          <span style={{ marginLeft: 2 }}>拆分工作表</span>
        </TaskItem>
        <Tray>
          <TraySlot $w={20}><MBox>M</MBox></TraySlot>
          <TraySlot $w={24}><ImeText>英</ImeText></TraySlot>
          <TraySlot $w={18}><S w={12} h={14}><path d="M6 1c3 4 2 9-5 11 5 2 10-1 10-5 0-3-2-5-5-6z" stroke="#fff" /></S></TraySlot>
          <TraySlot $w={20}><S w={16} h={10}><circle cx="3" cy="3" r="2" fill="#fff" /><path d="M13 3l-3 6" stroke="#fff" strokeWidth="2" /></S></TraySlot>
          <TraySlot $w={18}><ImeText>简</ImeText></TraySlot>
          <TraySlot $w={26}><S w={14} h={14}><circle cx="7" cy="7" r="2.500" stroke="#fff" /><circle cx="7" cy="7" r="5.500" stroke="#fff" strokeDasharray="2 1" strokeWidth="1.500" /></S></TraySlot>
          <TraySlot $w={26} $ml={15}><S w={15} h={15}><circle cx="9" cy="6" r="4.500" stroke="#f07c10" strokeWidth="2.500" /><path d="M5.500 10L1 14" stroke="#f07c10" strokeWidth="2.500" /></S></TraySlot>
          <TraySlot $w={24}><S w={16} h={16}><rect width="16" height="16" fill="#1f8fe0" /><rect x="6" y="2" width="8" height="5" fill="#fff" /><rect x="6" y="9" width="8" height="5" fill="#fff" /><rect x="2" y="3" width="2" height="2" fill="#fff" /><rect x="2" y="10" width="2" height="2" fill="#fff" /></S></TraySlot>
          <TraySlot $w={24}><S w={15} h={16}><rect width="15" height="16" fill="#111" stroke="#777" /><path d="M2 3h11M2 5h11M2 7h11M2 9h11M2 11h11M2 13h11" stroke="#999" /></S></TraySlot>
          <TraySlot $w={20}><S w={16} h={14}><circle cx="7" cy="7" r="5.500" fill="#e53a3a" stroke="#7e2c2c" /><path d="M14 1c2 3 2 9 0 12" stroke="#bbb" /></S></TraySlot>
          <TraySlot $w={26}><S w={15} h={15}><rect width="15" height="15" rx="2" fill="#fff" /><circle cx="7.500" cy="5" r="2.500" stroke="#3a6fd8" strokeWidth="1.400" /><circle cx="4.500" cy="9.500" r="2.500" stroke="#3a6fd8" strokeWidth="1.400" /><circle cx="10.500" cy="9.500" r="2.500" stroke="#e34b4b" strokeWidth="1.400" /></S></TraySlot>
          <TraySlot $w={26}><S w={15} h={15}><rect width="15" height="15" rx="3" fill="#2d8cf0" /><circle cx="7.500" cy="7.500" r="5" stroke="#fff" /><path d="M6 5v5M9.500 5L6.500 7.500l3 2.500" stroke="#fff" /></S></TraySlot>
          <TraySlot $w={24}><S w={15} h={17}><ellipse cx="7.500" cy="6" rx="4.500" ry="6" fill="#111" /><ellipse cx="7.500" cy="11" rx="5" ry="4.500" fill="#e23a2e" /><ellipse cx="7.500" cy="8" rx="3" ry="3.500" fill="#fff" /><ellipse cx="4" cy="16" rx="3" ry="1" fill="#f0b020" /><ellipse cx="11" cy="16" rx="3" ry="1" fill="#f0b020" /></S></TraySlot>
          <TraySlot $w={24}><S w={16} h={16}><circle cx="8" cy="8" r="7.500" fill="#e8c81a" /><path d="M8 4v8M4 8h8" stroke="#146e2a" strokeWidth="2.500" /></S></TraySlot>
          <TraySlot $w={22}><S w={15} h={11}><rect x="3.500" y="2.500" width="11" height="7" stroke="#fff" /><rect x="5" y="4" width="8" height="4" fill="#fff" /><path d="M0 3h3M0 7h3" stroke="#fff" /></S></TraySlot>
          <TraySlot $w={28}><S w={15} h={13}><path d="M1 12C1 6 6 1 14 1M4 12c0-4 4-8 10-8M7 12c0-2 3-5 7-5" stroke="#b9c4cd" /><circle cx="11" cy="11" r="1.500" fill="#fff" /></S></TraySlot>
          <TraySlot $w={20}><S w={15} h={13}><path d="M1 4.500h3l4-3v10l-4-3H1z" stroke="#dde" /><path d="M10 4c1 1.500 1 3.500 0 5M12 2c2 2.500 2 6.500 0 9" stroke="#8ea0ad" /></S></TraySlot>
          <TraySlot $w={28} $ml={6}><BatteryBadge>65</BatteryBadge></TraySlot>
          <Clock><span>下午 1:52:49</span><span>2018/4/29 星期日</span></Clock>
        </Tray>
      </Taskbar>

      <Dialog>
        <DlgTitle>
          <DlgIcon />
          拆分工作表
          <DlgTitleRight>
            <span>?</span>
            <S w={12} h={12}><path d="M1 1l10 10M11 1L1 11" stroke="#1e2a33" strokeWidth="1.100" /></S>
          </DlgTitleRight>
        </DlgTitle>

        <GroupBox $h={76} $mt={21} $pt={16} $pl={26}>
          <Legend>表头和表尾</Legend>
          <FormRow><FieldLabel $w={73}>表头行数：</FieldLabel><SpinBox /><InfoDot>i</InfoDot><Hint>生成的表都将包含表头</Hint></FormRow>
          <FormRow $mt={7}><FieldLabel $w={73}>表尾行数：</FieldLabel><SpinBox focus /><InfoDot>i</InfoDot><Hint>生成的表都将包含表尾</Hint></FormRow>
        </GroupBox>

        <GroupBox $h={118} $mt={14} $pt={19} $pl={27}>
          <Legend>拆分方式</Legend>
          <FormRow $h={20}><Radio $on />按关键字所在列：<Combo><span>【A】年份</span><Chev c="#444" /></Combo><LinkText>增加字段</LinkText></FormRow>
          <FormRow $mt={8}><Radio />每<SpinBox ml={9} /><FieldLabel $ml={6}>行拆分为一个表</FieldLabel></FormRow>
          <Rule />
          <FormRow $h={20} $mt={10}>
            <Tick><CheckMark /></Tick>保留格式
            <Tick $ml={26}><CheckMark /></Tick>保留公式
            <Tick $ml={33}><CheckMark /></Tick>保留批注
          </FormRow>
        </GroupBox>

        <GroupBox $h={71} $mt={14} $pt={14} $pl={28}>
          <Legend>保存</Legend>
          <FormRow>
            新表名：<Radio $on $ml={10} />使用关键字<Radio $ml={19} />自定义：<TextInput>分表</TextInput>+序号
          </FormRow>
          <FormRow $h={20} $mt={7}>
            <Tick $ml={-1}></Tick>保存为独立工作簿：
            <FolderBtn><Folder /></FolderBtn>
            <SelectBox>.xlsx<Chev c="#555" /></SelectBox>
          </FormRow>
        </GroupBox>

        <BtnRow><DlgBtn>确定</DlgBtn><DlgBtn>退出</DlgBtn></BtnRow>
        <DlgStatus>状态:<Progress /><ResizeGrip><S w={10} h={10}><path d="M8 0h2v2H8zM4 4h2v2H4zM8 4h2v2H8zM0 8h2v2H0zM4 8h2v2H4zM8 8h2v2H8z" fill="#8f8f8f" /></S></ResizeGrip></DlgStatus>
      </Dialog>

      <Spot />
      <Pointer>
        <svg width={15} height={22} viewBox="0 0 15 22"><path d="M1 1v16l4-3.500 3 7 3-1.500-3-6.500h5.500z" fill="#fff" stroke="#111" /></svg>
      </Pointer>

      <Recorder>
        <RecSection $w={74} $border><PauseBar /><PauseBar style={{ marginRight: 0 }} /><StopBtn /></RecSection>
        <RecSection $w={120} $border><Timer>00:01:08</Timer></RecSection>
        <RecSection $w={110} $pl={6}>
          <S w={18} h={16}><path d="M0 3h5l1-2h6l1 2h5v10H0z" fill="#fff" /><circle cx="9" cy="8" r="3" fill="#1e1e1e" /><rect y="14" width="18" height="2" fill="#888" /></S>
          <span style={{ width: 12 }} />
          <S w={22} h={16}><path d="M2 12L12 1l2 2L4 14z" fill="#eee" /><path d="M6 15h16" stroke="#888" /></S>
          <span style={{ width: 15 }} />
          <S w={17} h={16}><rect x="5" y="1" width="11" height="10" fill="#1e1e1e" stroke="#fff" strokeWidth="1.500" /><path d="M4 6H1v9h10v-3" stroke="#888" strokeWidth="1.200" /></S>
        </RecSection>
      </Recorder>
    </Screen>
  );
}
